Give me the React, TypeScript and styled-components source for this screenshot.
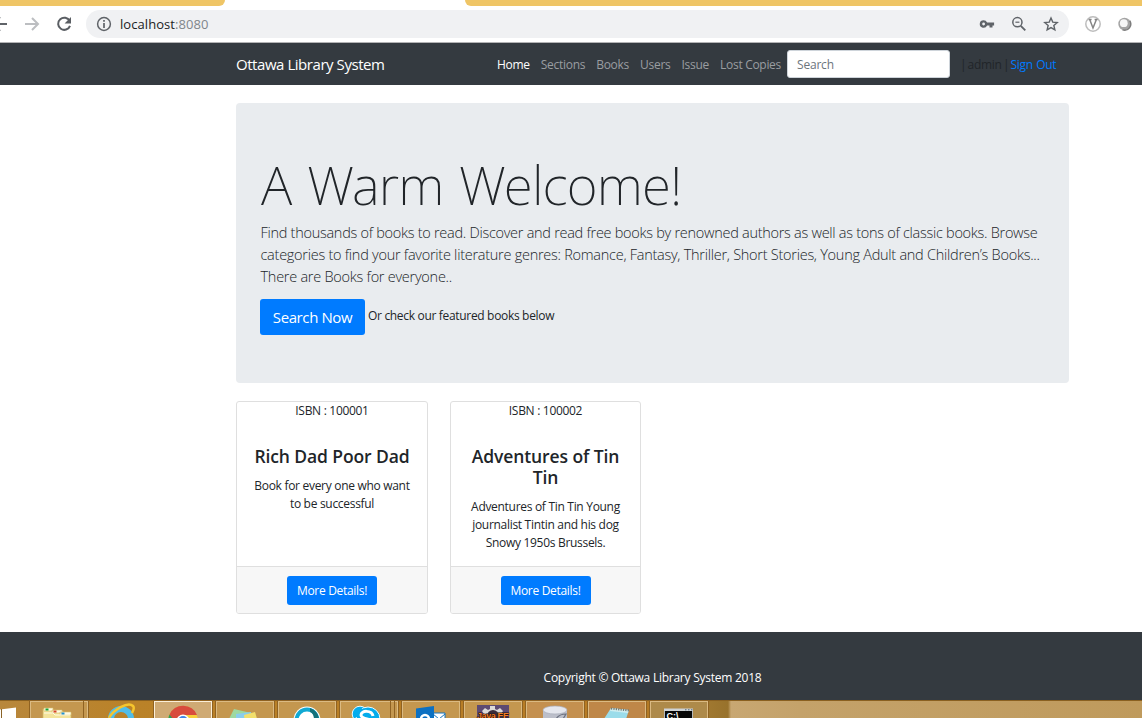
import React from "react";
import styled, { createGlobalStyle } from "styled-components";

const Global = createGlobalStyle`
  *, *::before, *::after { box-sizing: border-box; }
  html, body { margin: 0; padding: 0; background: #fff; }
  body {
    font-family: "Open Sans", "Noto Sans", sans-serif;
    font-size: 12px;
    line-height: 18px;
    color: #212529;
    overflow: hidden;
  }
  h1, h4, p { margin: 0; }
  svg { display: block; flex: none; }
`;

const Screen = styled.div`
  width: 1142px;
  height: 718px;
  display: flex;
  flex-direction: column;
  overflow: hidden;
`;

const TabStrip = styled.div`
  height: 6px;
  flex: none;
  display: flex;
  justify-content: space-between;
`;
const StripPart = styled.div<{ $w: number; $corner: "left" | "right" }>`
  width: ${(p) => p.$w}px;
  background: #efc566;
  border-radius: ${(p) => (p.$corner === "right" ? "0 0 7px 0" : "0 0 0 7px")};
`;
const BrowserBar = styled.div`
  height: 37px;
  flex: none;
  display: flex;
  align-items: center;
  border-bottom: 1px solid #b3b3b5;
  background: #fff;
`;
const NavButtons = styled.div`
  width: 86px;
  display: flex;
  align-items: center;
`;
const Omnibox = styled.div`
  width: 983px;
  height: 28px;
  border-radius: 14px;
  background: #f0f1f3;
  display: flex;
  align-items: center;
  padding: 0 9px 0 9px;
`;
const Address = styled.div`
  margin-left: 7px;
  flex: 1;
  font-size: 13px;
  letter-spacing: 0.06px;
  color: #202124;
  span { color: #80868b; }
`;
const OmniIcons = styled.div`
  display: flex;
  gap: 14px;
`;
const Extensions = styled.div`
  display: flex;
  gap: 14px;
  margin-left: 15px;
`;

const Navbar = styled.nav`
  height: 42px;
  flex: none;
  background: #343a40;
  display: flex;
  align-items: center;
  padding-left: 236px;
`;
const Brand = styled.a`
  width: 261px;
  font-size: 15px;
  letter-spacing: -0.45px;
  color: #fff;
  white-space: nowrap;
`;
const Links = styled.div`
  width: 290px;
  display: flex;
  justify-content: space-between;
  padding: 1px 6px 0 0;
`;
const NavLink = styled.a<{ $active?: boolean }>`
  color: ${(p) => (p.$active ? "#fff" : "#9a9da0")};
  letter-spacing: -0.3px;
  white-space: nowrap;
`;
const SearchField = styled.input`
  width: 163px;
  height: 28px;
  border: 1px solid #ced4da;
  border-radius: 3px;
  padding: 1px 9px 0;
  font: inherit;
  letter-spacing: -0.2px;
  background: #fff;
  &::placeholder { color: #6c757d; opacity: 1; }
`;
const Account = styled.div`
  margin: 1px 0 0 10px;
  letter-spacing: -0.3px;
  word-spacing: -1.5px;
  white-space: nowrap;
  a { color: #007bff; word-spacing: 0.5px; }
`;

const Main = styled.main`
  width: 833px;
  height: 547px;
  flex: none;
  margin-left: 236px;
  padding-top: 18px;
`;
const Jumbotron = styled.header`
  height: 280px;
  border-radius: 4px;
  background: #e9ecef;
  padding: 49px 24px 0;
`;
const Welcome = styled.h1`
  font-family: "Noto Sans", "Open Sans", sans-serif;
  font-weight: 200;
  font-size: 53px;
  line-height: 66px;
  letter-spacing: -0.85px;
  word-spacing: 2.8px;
  text-indent: 1px;
  white-space: nowrap;
`;
const Lead = styled.p`
  margin: 4px 0 0 0.5px;
  font-size: 14.5px;
  line-height: 22px;
  font-weight: 330;
`;
const LeadLine = styled.span<{ $track: number }>`
  display: block;
  white-space: nowrap;
  letter-spacing: ${(p) => p.$track}px;
`;
const Actions = styled.div`
  margin-top: 11px;
  display: flex;
  gap: 3px;
  letter-spacing: -0.32px;
`;
const Hint = styled.span`
  margin-top: 8px;
`;
const Button = styled.button<{ $large?: boolean }>`
  width: ${(p) => (p.$large ? 105 : 90)}px;
  height: ${(p) => (p.$large ? 36 : 29)}px;
  border: 0;
  border-radius: 3px;
  padding: 0;
  background: #007bff;
  color: #fff;
  font: inherit;
  font-size: ${(p) => (p.$large ? 15 : 12)}px;
  letter-spacing: ${(p) => (p.$large ? -0.4 : -0.3)}px;
`;
const Cards = styled.section`
  margin-top: 18px;
  display: flex;
  gap: 22px;
`;
const Card = styled.article<{ $w: number }>`
  width: ${(p) => p.$w}px;
  height: 213px;
  border: 1px solid #dfdfdf;
  border-radius: 3px;
  display: flex;
  flex-direction: column;
  text-align: center;
  overflow: hidden;
`;
const CardBody = styled.div`
  flex: 1;
`;
const CardTitle = styled.h4`
  margin: 26px 0 10px;
  font-size: 17.5px;
  line-height: 21px;
  font-weight: 560;
  letter-spacing: -0.1px;
`;
const CardLine = styled.span`
  display: block;
  white-space: nowrap;
  letter-spacing: -0.3px;
`;
const CardFooter = styled.div`
  height: 47px;
  border-top: 1px solid #dfdfdf;
  background: #f7f7f7;
  padding-top: 9px;
`;
const PageFooter = styled.footer`
  height: 68px;
  flex: none;
  background: #343a40;
  color: #fff;
  text-align: center;
  padding: 37px 0 0 163px;
  letter-spacing: -0.25px;
`;

const Taskbar = styled.div`
  height: 18px;
  flex: none;
  display: flex;
  align-items: flex-start;
  background: linear-gradient(90deg, #b8873c 0, #ba8228 130px, #b77b24 640px, #a07830 708px, #98722c 728px, #c8a772 731px, #c4a26a 800px, #bf9a5c 1142px);
  border-top: 1px solid #8a6020;
`;
const TaskItem = styled.div<{ $w: number; $ml?: number; $kind?: "plain" | "active" | "edge"; $tone?: string }>`
  width: ${(p) => p.$w}px;
  height: 24px;
  flex: none;
  margin-left: ${(p) => p.$ml ?? 0}px;
  display: flex;
  justify-content: center;
  border: ${(p) => (p.$kind === "plain" ? "0" : p.$kind === "active" ? "1px solid #fbefd8" : "1px solid #dbba82")};
  background: ${(p) => (p.$kind === "plain" ? "transparent" : p.$kind === "active" ? "#cfaa74" : p.$tone ?? "#c4974f")};
  outline: ${(p) => (p.$kind === "plain" ? "0" : "1px solid #8f6222")};
  ${(p) => (p.$kind === "edge" ? "border-left: 0;" : "")}
`;
const IconLabel = styled.text`
  font-family: "Liberation Sans", sans-serif;
  font-weight: 700;
`;

const Back = () => (
  <svg width="24" height="24" viewBox="0 0 24 24" fill="none" stroke="#5f6368" strokeWidth="2" style={{ marginLeft: -12 }}>
    <path d="M19 12H5M12 5l-7 7 7 7" />
  </svg>
);
const Forward = () => (
  <svg width="20" height="20" viewBox="0 0 20 20" fill="none" stroke="#bcbec1" strokeWidth="2">
    <path d="M3 10h13M10 4l6 6-6 6" />
  </svg>
);
const Reload = () => (
  <svg width="20" height="20" viewBox="0 0 20 20">
    <path d="M15.7 7A6.1 6.1 0 1 0 16 11.8" fill="none" stroke="#5a5e63" strokeWidth="2" />
    <path d="M17 3v6.4h-6.4z" fill="#5a5e63" />
  </svg>
);
const Info = () => (
  <svg width="18" height="18" viewBox="0 0 18 18">
    <circle cx="9" cy="9" r="6.4" fill="none" stroke="#5f6368" strokeWidth="1.5" />
    <path d="M9 5v1.8M9 8v5" stroke="#5f6368" strokeWidth="1.7" />
  </svg>
);
const Key = () => (
  <svg width="18" height="18" viewBox="0 0 18 18">
    <path d="M5.6 5.2a3.8 3.8 0 1 0 3.5 5.2h2.4v2.2h3v-2.2h1.6V7.4h-7A3.8 3.8 0 0 0 5.6 5.2zm0 2.4a1.4 1.4 0 1 1 0 2.8 1.4 1.4 0 0 1 0-2.8z" fill="#5f6368" />
  </svg>
);
const ZoomOut = () => (
  <svg width="18" height="18" viewBox="0 0 18 18" fill="none" stroke="#5f6368">
    <circle cx="7.4" cy="7.2" r="4.6" strokeWidth="1.5" />
    <path d="M5.4 7.2h4" strokeWidth="1.2" />
    <path d="M10.8 10.8l4.5 4.5" strokeWidth="1.9" />
  </svg>
);
const Star = () => (
  <svg width="18" height="18" viewBox="0 0 18 18" fill="none" stroke="#5f6368" strokeWidth="1.4">
    <path d="M9 3l1.75 4.1 4.5.4-3.4 3 1 4.4L9 12.6l-3.85 2.3 1-4.4-3.4-3 4.5-.4z" />
  </svg>
);
const VExtension = () => (
  <svg width="18" height="18" viewBox="0 0 18 18">
    <circle cx="9" cy="9" r="7.2" fill="#fff" stroke="#bdbdbd" strokeWidth="1.5" />
    <path d="M4.6 4.6h3M10.6 4.6h3M5.8 4.8L9 13l3.3-8.2" fill="none" stroke="#858585" strokeWidth="1.5" />
  </svg>
);
const RingExtension = () => (
  <svg width="18" height="18" viewBox="0 0 18 18">
    <circle cx="8.5" cy="9" r="6.2" fill="#a4a4a4" />
    <path d="M13.7 5.6a6.2 6.2 0 0 1-7.2 9.3" fill="none" stroke="#7c7c7c" strokeWidth="1.5" />
    <circle cx="7.8" cy="8.2" r="3.9" fill="#f6f6f6" />
  </svg>
);

const Folder = () => (
  <svg width="34" height="17" viewBox="0 0 34 17">
    <path d="M3 17V7h10v2h10v2h8v6z" fill="#f3e39b" stroke="#d4b765" strokeWidth=".7" />
    <path d="M4 6h9v3H4zM12 8h10v3H12zM20 10h11v3H20z" fill="#fffbe4" stroke="#d9bf6d" strokeWidth=".6" />
    <path d="M4 11h9l2 2h15" fill="none" stroke="#fffbe4" />
    <path d="M5.500 6.500h3v2h-3z" fill="#16a43a" />
    <path d="M13.500 8.500h3v2h-3z" fill="#d6452b" />
    <path d="M21.500 10.500h3v2h-3z" fill="#2492d1" />
  </svg>
);
const Explorer = () => (
  <svg width="34" height="17" viewBox="0 0 34 17">
    <circle cx="17" cy="18" r="10" fill="none" stroke="#50bde9" strokeWidth="6" />
    <path d="M5 17C9 9 24 0 29 5c2 2 0 5-1 7" fill="none" stroke="#f6c52d" strokeWidth="2.5" />
  </svg>
);
const Chrome = () => (
  <svg width="34" height="17" viewBox="0 0 34 17">
    <circle cx="17" cy="19" r="15" fill="#f7cf3a" />
    <path d="M17 19L3.500 12.500A15 15 0 0 0 10 32z" fill="#2da155" />
    <path d="M3.500 12.500A15 15 0 0 1 31 13H17l-7 8z" fill="#d84b3d" />
    <circle cx="17" cy="19" r="6.5" fill="#fff" />
    <circle cx="17" cy="19" r="5" fill="#4086e8" />
  </svg>
);
const Notes = () => (
  <svg width="34" height="17" viewBox="0 0 34 17">
    <path d="M6 7l17 4-3 12L1 17z" fill="#9ed9a0" />
    <path d="M8 12l15-2 2 12H8z" fill="#8bcdec" />
    <path d="M16 13l11-3 3 10H17z" fill="#f2df6c" />
  </svg>
);
const Webex = () => (
  <svg width="34" height="17" viewBox="0 0 34 17">
    <circle cx="17" cy="18" r="13.5" fill="#fff" />
    <circle cx="17" cy="18" r="10.5" fill="none" stroke="#11a9d3" strokeWidth="4" />
    <path d="M20 6a12.500 12.500 0 0 1 9 12h-5c0-4-1-7-4-8z" fill="#14707a" />
  </svg>
);
const Skype = () => (
  <svg width="34" height="17" viewBox="0 0 34 17">
    <circle cx="11" cy="12" r="7.8" fill="#04acec" stroke="#e9faff" />
    <circle cx="19" cy="17" r="12" fill="#04acec" stroke="#e9faff" />
    <path d="M5 9c3-4 6-4 9-2l-3 8H6z" fill="#04acec" />
    <path d="M24 14c-1-6-12-6-12-1 0 5 11 3 11 7" fill="none" stroke="#fff" strokeWidth="3" />
  </svg>
);
const Outlook = () => (
  <svg width="34" height="17" viewBox="0 0 34 17">
    <path d="M18 11h13v8H18z" fill="#fff" stroke="#1474c1" />
    <path d="M19 12l6 5 6-5" fill="none" stroke="#1474c1" />
    <path d="M2 6.500L20 4v16H2z" fill="#0c70c2" />
    <circle cx="11" cy="17" r="4" fill="none" stroke="#fff" strokeWidth="2.4" />
  </svg>
);
const Eclipse = () => (
  <svg width="34" height="17" viewBox="0 0 34 17">
    <path d="M1 3h32v14H1z" fill="#5d4a72" />
    <path d="M8 12l-2-3 3-3 3 2 2-1V4h5v3l2 1 3-2 3 3-2 3z" fill="#dcdad9" />
    <circle cx="17" cy="14" r="6" fill="#3a2b38" />
    <IconLabel x="1" y="17" fontSize="9" textLength="32" fill="#f47b20" stroke="#24130d" strokeWidth="1" paintOrder="stroke">Java EE</IconLabel>
  </svg>
);
const Database = () => (
  <svg width="34" height="17" viewBox="0 0 34 17">
    <path d="M5 8v10h24V8z" fill="#bcbfca" />
    <ellipse cx="17" cy="8" rx="12" ry="4" fill="#e5e7ee" stroke="#a9adba" strokeWidth=".7" />
    <path d="M18 17c3-5 7-5 10-5l-3 5" fill="none" stroke="#6c7280" strokeWidth="1.2" />
  </svg>
);
const Notepad = () => (
  <svg width="34" height="17" viewBox="0 0 34 17">
    <path d="M11 6l18 2-4 12H2z" fill="#9bdcea" />
    <path d="M11 6l18 2-1 3-18-2z" fill="#cfeef0" />
    <path d="M11 6.500l18 2" fill="none" stroke="#73756e" strokeWidth="2" strokeDasharray="1.2 1.2" />
  </svg>
);
const Terminal = () => (
  <svg width="34" height="17" viewBox="0 0 34 17">
    <path d="M2.500 7.500h28V18h-28z" fill="#070707" stroke="#b7b9b8" />
    <path d="M2 6.500h29v2.500H2z" fill="#cfd3d6" />
    <path d="M23 7.800h1.500M26 7.800h1.500M29 7.800h1.500" stroke="#4c657c" />
    <IconLabel x="4.5" y="17" fontSize="9" fill="#fff">C:\</IconLabel>
  </svg>
);
const StartCorner = () => (
  <svg width="17" height="17" viewBox="0 0 17 17">
    <path d="M0 8.500l16-2V17H0z" fill="#fff" />
    <path d="M1.500 8v9" stroke="#8a6327" strokeWidth="1" />
  </svg>
);

export default function App() {
  return (
    <Screen>
      <Global />
      <TabStrip>
        <StripPart $w={225} $corner="right" />
        <StripPart $w={677} $corner="left" />
      </TabStrip>
      <BrowserBar>
        <NavButtons>
          <Back />
          <svg width="10" height="1" />
          <Forward />
          <svg width="12" height="1" />
          <Reload />
        </NavButtons>
        <Omnibox>
          <Info />
          <Address>localhost<span>:8080</span></Address>
          <OmniIcons><Key /><ZoomOut /><Star /></OmniIcons>
        </Omnibox>
        <Extensions><VExtension /><RingExtension /></Extensions>
      </BrowserBar>

      <Navbar>
        <Brand>Ottawa Library System</Brand>
        <Links>
          <NavLink $active>Home</NavLink>
          <NavLink>Sections</NavLink>
          <NavLink>Books</NavLink>
          <NavLink>Users</NavLink>
          <NavLink>Issue</NavLink>
          <NavLink>Lost Copies</NavLink>
        </Links>
        <SearchField placeholder="Search" />
        <Account>| admin | <a>Sign Out</a></Account>
      </Navbar>

      <Main>
        <Jumbotron>
          <Welcome>A Warm Welcome!</Welcome>
          <Lead>
            <LeadLine $track={-0.28}>Find thousands of books to read. Discover and read free books by renowned authors as well as tons of classic books. Browse</LeadLine>
            <LeadLine $track={-0.265}>categories to find your favorite literature genres: Romance, Fantasy, Thriller, Short Stories, Young Adult and Children’s Books...</LeadLine>
            <LeadLine $track={-0.26}>There are Books for everyone..</LeadLine>
          </Lead>
          <Actions>
            <Button $large>Search Now</Button>
            <Hint>Or check our featured books below</Hint>
          </Actions>
        </Jumbotron>
        <Cards>
          <Card $w={192}>
            <CardBody>
              <CardLine>ISBN : 100001</CardLine>
              <CardTitle>Rich Dad Poor Dad</CardTitle>
              <CardLine>Book for every one who want</CardLine>
              <CardLine>to be successful</CardLine>
            </CardBody>
            <CardFooter><Button>More Details!</Button></CardFooter>
          </Card>
          <Card $w={191}>
            <CardBody>
              <CardLine>ISBN : 100002</CardLine>
              <CardTitle>Adventures of Tin<br />Tin</CardTitle>
              <CardLine>Adventures of Tin Tin Young</CardLine>
              <CardLine>journalist Tintin and his dog</CardLine>
              <CardLine>Snowy 1950s Brussels.</CardLine>
            </CardBody>
            <CardFooter><Button>More Details!</Button></CardFooter>
          </Card>
        </Cards>
      </Main>

      <PageFooter>Copyright © Ottawa Library System 2018</PageFooter>

      <Taskbar>
        <StartCorner />
        <TaskItem $w={54} $ml={13}><Folder /></TaskItem>
        <TaskItem $w={4} $kind="edge" />
        <TaskItem $w={65} $kind="plain"><Explorer /></TaskItem>
        <TaskItem $w={58} $ml={1} $kind="active"><Chrome /></TaskItem>
        <TaskItem $w={58} $ml={4}><Notes /></TaskItem>
        <TaskItem $w={58} $ml={4}><Webex /></TaskItem>
        <TaskItem $w={51} $ml={4}><Skype /></TaskItem>
        <TaskItem $w={4} $kind="edge" />
        <TaskItem $w={3} $kind="edge" />
        <TaskItem $w={58} $ml={4}><Outlook /></TaskItem>
        <TaskItem $w={58} $ml={4}><Eclipse /></TaskItem>
        <TaskItem $w={58} $ml={4} $tone="#c4904f"><Database /></TaskItem>
        <TaskItem $w={58} $ml={4} $tone="#bf8748"><Notepad /></TaskItem>
        <TaskItem $w={58} $ml={4} $tone="#ae8a4a"><Terminal /></TaskItem>
      </Taskbar>
    </Screen>
  );
}
